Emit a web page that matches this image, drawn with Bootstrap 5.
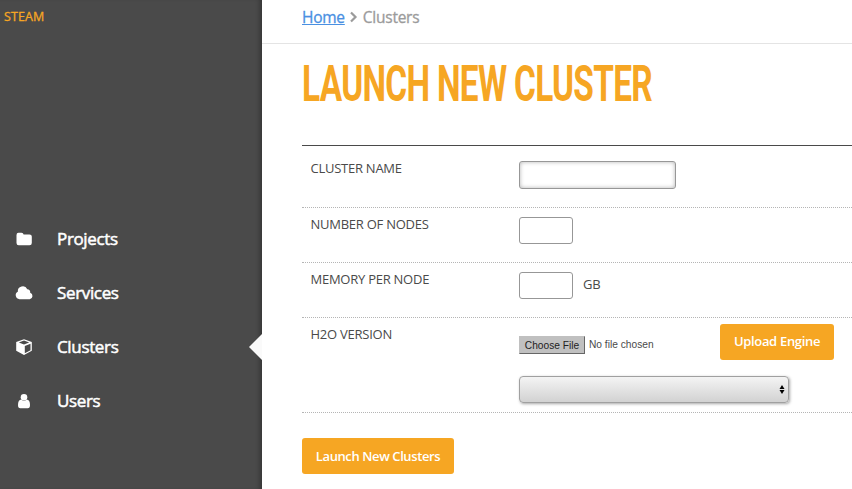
<!DOCTYPE html>
<html lang="en">
<head>
<meta charset="utf-8">
<title>Steam - Launch New Cluster</title>
<meta name="viewport" content="width=device-width, initial-scale=1">
<link href="https://cdn.jsdelivr.net/npm/bootstrap@5.3.0/dist/css/bootstrap.min.css" rel="stylesheet">
<style>
  body { font-family: "Open Sans", sans-serif; font-size: 13px; line-height: 18px; color: #4a4a4a; height: 489px; }
  .side { width: 262px; background: #4a4a4a; box-shadow: inset -5px 0 5px -3px rgba(0,0,0,.3); }
  .brand { height: 212px; padding: 8px 4px; color: #f6a623; font-size: 12.5px; letter-spacing: .1px; -webkit-text-stroke: .3px #f6a623; }
  .side .nav-link { height: 54px; padding: 0 0 0 15px; color: #fff; font-size: 17px; letter-spacing: -.35px; -webkit-text-stroke: .5px #fff; }
  .side .nav-link svg { width: 18px; height: 18px; margin-right: 24px; fill: #fff; }
  .side .nav-link.active::after { content: ""; position: absolute; right: 0; top: 14px; border: 13px solid transparent; border-left: 0; border-right-color: #fafafa; }
  .crumbs { height: 44px; padding: 0 0 9px 40px; border-bottom: 1px solid #e4e4e4; font-size: 15.5px; color: #9b9b9b; letter-spacing: -.25px; -webkit-text-stroke: .3px; }
  .crumbs a { color: #4a90e2; }
  .content { padding-left: 40px; }
  .title { height: 102px; margin: 0; padding-top: 10px; border-bottom: 1px solid #4a4a4a; color: #f6a623; }
  .title span { display: inline-block; font: 700 50px/60px Roboto, sans-serif; letter-spacing: -1px; white-space: nowrap; transform: scaleX(.667); transform-origin: 0 0; }
  .field { height: 55px; padding-left: 8.5px; border-bottom: 1px dotted #b5b5b5; }
  .field-first { height: 62px; padding-top: 6px; }
  .field-engine { height: 95px; }
  .name-col { width: 208.5px; padding-top: 7px; letter-spacing: -.25px; }
  .entry { border: 1px solid #979797; border-radius: 3px; background: #fff; height: 27px; padding: 0 5px; margin-top: 9px; }
  .entry-sm { width: 54px; }
  .entry-lg { width: 157px; height: 28px; box-shadow: inset 0 0 4px rgba(0,0,0,.3); }
  .unit { margin: 12px 0 0 10px; letter-spacing: -.3px; }
  .cta { height: 36px; border-radius: 3px; border: 0; padding: 0; background: #f6a623; color: #fff; font-size: 13px; font-weight: 600; letter-spacing: -.4px; }
  .upload { width: 114px; margin-top: 2px; padding-bottom: 2px; letter-spacing: -.32px; }
  .launch { width: 152px; margin-top: 25px; }
  .chooser { font: 10.200px/17px "Liberation Sans", Arial, sans-serif; padding-top: 14px; width: 201px; }
  .chooser button { font-family: inherit; font-size: 10.200px; line-height: 16px; width: 66px; height: 18px; padding: 1px 0 0; color: #222; background: #c0c0c0; border: 1px solid #c0c0c0; border-right-color: #666; border-bottom-color: #666; }
  .chooser span { margin-top: -1px; }
  .picker { width: 270px; height: 27px; margin-top: 16px; padding-right: 3px; border: 1px solid #a0a0a0; border-radius: 4px; background: linear-gradient(#f4f4f4, #d2d2d2); box-shadow: 1px 1px 3px rgba(0,0,0,.35); }
</style>
</head>
<body class="d-flex overflow-hidden bg-white">
<aside class="side flex-shrink-0">
  <div class="brand">STEAM</div>
  <nav class="nav flex-column">
    <a class="nav-link d-flex align-items-center" href="#"><svg viewBox="0 0 18 18"><path d="M1.500 5Q1.500 2.800 3.500 2.800H6.500Q8.300 2.800 8.600 4.400H14.500Q16.800 4.400 16.800 6.500V13Q16.800 15.200 14.500 15.200H3.700Q1.500 15.200 1.500 13Z"/></svg>Projects</a>
    <a class="nav-link d-flex align-items-center" href="#"><svg viewBox="0 0 18 18"><path d="M4.500 15.200A4 4 0 0 1 2.800 7.700A5 5 0 0 1 12.300 5.200A3 3 0 0 1 15.200 8.800A3.300 3.300 0 0 1 14.700 15.200Z"/></svg>Services</a>
    <a class="nav-link active position-relative d-flex align-items-center" href="#"><svg viewBox="0 0 18 18"><path fill-rule="evenodd" d="M9 1.300L16.800 4V12.800L9 17L1.200 12.800V4ZM9 2.600L3.800 4.500L9 6.500L14.200 4.500ZM9.800 8V15.200L15.500 12.200V5.800Z"/></svg>Clusters</a>
    <a class="nav-link d-flex align-items-center" href="#"><svg viewBox="0 0 18 18"><circle cx="9" cy="5.200" r="3.300"/><path d="M6.300 7.600Q9 10 11.700 7.600Q15 8 15 13Q15 16.200 12.700 16.200H5.300Q3 16.200 3 13Q3 8 6.300 7.600Z"/></svg>Users</a>
  </nav>
</aside>
<main class="flex-grow-1">
  <div class="crumbs d-flex align-items-center">
    <a href="#">Home</a>
    <svg class="mx-1" width="10" height="12" viewBox="0 0 10 12" fill="none" stroke="#9b9b9b" stroke-width="2.200"><path d="M2 1.500L6.500 6L2 10.500"/></svg>
    <span>Clusters</span>
  </div>
  <div class="content">
    <h1 class="title"><span>LAUNCH NEW CLUSTER</span></h1>
    <form>
      <div class="field field-first d-flex align-items-start"><label class="name-col" for="cname">CLUSTER NAME</label><input id="cname" class="entry entry-lg"></div>
      <div class="field d-flex align-items-start"><label class="name-col" for="nodes">NUMBER OF NODES</label><input id="nodes" class="entry entry-sm"></div>
      <div class="field d-flex align-items-start"><label class="name-col" for="mem">MEMORY PER NODE</label><input id="mem" class="entry entry-sm"><span class="unit">GB</span></div>
      <div class="field field-engine d-flex align-items-start">
        <div class="name-col">H2O VERSION</div>
        <div>
          <div class="d-flex align-items-start pt-1">
            <div class="chooser d-flex align-items-center gap-1"><button type="button">Choose File</button><span>No file chosen</span></div>
            <button type="button" class="cta upload">Upload Engine</button>
          </div>
          <div class="picker d-flex align-items-center justify-content-end"><svg width="6" height="9" viewBox="0 0 6 9"><path d="M3 0L5.500 4H.5ZM3 9L.5 5H5.500Z"/></svg></div>
        </div>
      </div>
      <button type="button" class="cta launch">Launch New Clusters</button>
    </form>
  </div>
</main>
<script src="https://cdn.jsdelivr.net/npm/bootstrap@5.3.0/dist/js/bootstrap.bundle.min.js"></script>
</body>
</html>
